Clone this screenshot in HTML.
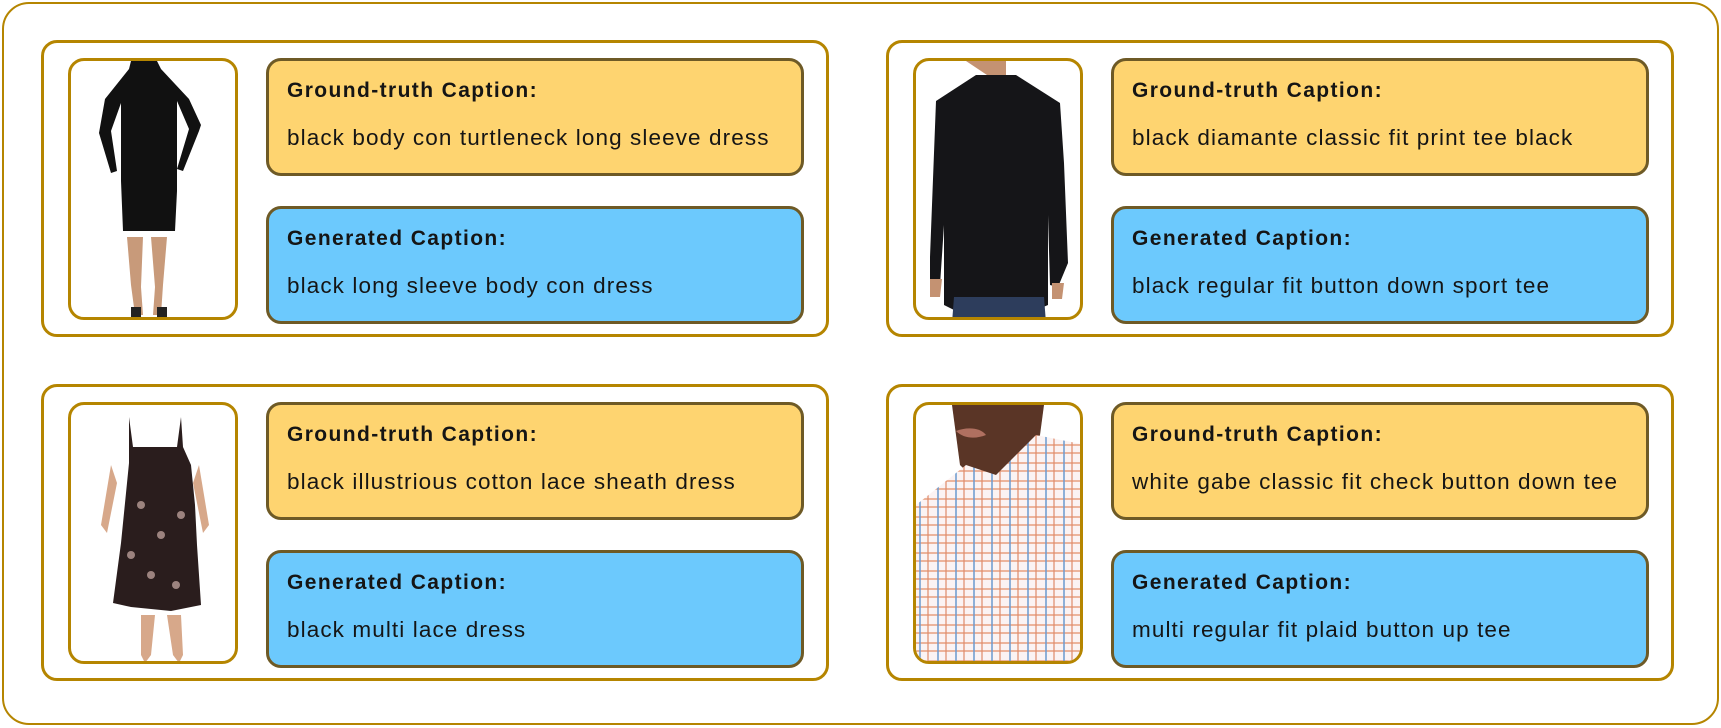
<!DOCTYPE html>
<html><head><meta charset="utf-8"><style>
*{box-sizing:border-box;margin:0;padding:0}
body{width:1721px;height:728px;background:#fff;font-family:"Liberation Sans",sans-serif;position:relative;overflow:hidden}
.outer{position:absolute;left:2px;top:2px;width:1717px;height:723px;border:2.5px solid #b58500;border-radius:27px}
.card{position:absolute;width:788px;height:297px;border:3px solid #b58500;border-radius:16px;background:#fff}
.img{position:absolute;left:24px;top:15px;width:170px;height:262px;border:3px solid #b58500;border-radius:16px;overflow:hidden;background:#fff}
.box{position:absolute;left:222px;width:538px;height:118px;border:3px solid #6e5a26;border-radius:15px;color:#151515}
.y{top:15px;background:#fed470}
.b{top:163px;background:#6cc9fd}
.t{position:absolute;left:18px;top:18px;font-weight:bold;font-size:21px;letter-spacing:1.4px}
.d{position:absolute;left:18px;top:64px;font-size:22.5px;letter-spacing:1.1px}
</style></head><body>
<div class="outer"></div>

<div class="card" style="left:41px;top:40px">
<div class="img"><svg width="170" height="262" viewBox="0 0 170 262">
<path d="M60 0h26l4 8 28 30 12 26-2 6-16 40-6-2 12-40-12-28v90l-2 40H52l-2-50V42l-10 28 6 40-6 2-12-40 6-34 24-30z" fill="#111"/>
<path d="M56 176h16l-2 50 2 28h-8l-4-30zM80 176h16l-4 48-2 30h-8l2-28z" fill="#c89a7a"/>
<path d="M60 246h10v12h-10zM86 246h10v12h-10z" fill="#222"/></svg></div>
<div class="box y"><div class="t">Ground-truth Caption:</div><div class="d">black body con turtleneck long sleeve dress</div></div>
<div class="box b"><div class="t">Generated Caption:</div><div class="d">black long sleeve body con dress</div></div>
</div>

<div class="card" style="left:886px;top:40px">
<div class="img"><svg width="170" height="262" viewBox="0 0 170 262">
<path d="M50 0h40v14l-10 6z" fill="#c49272"/>
<path d="M20 40l40-26h40l44 28 4 60 4 100-10 24-8-2-2-70v90l-14 6H40l-12-6v-80l-4 60-10 2 0-30z" fill="#151518"/>
<path d="M38 236h90l2 26H36z" fill="#2d3d5c"/>
<path d="M14 218h12l-2 18h-10zM136 222h12l-2 16h-10z" fill="#c49272"/></svg></div>
<div class="box y"><div class="t">Ground-truth Caption:</div><div class="d">black diamante classic fit print tee black</div></div>
<div class="box b"><div class="t">Generated Caption:</div><div class="d">black regular fit button down sport tee</div></div>
</div>

<div class="card" style="left:41px;top:384px">
<div class="img"><svg width="170" height="262" viewBox="0 0 170 262">
<path d="M58 12l4 30h44l4-30 2 30 8 18 4 40 2 40 4 60-30 6-40-4-18-4 8-60 4-40 4-40z" fill="#2a1d1d"/>
<path d="M40 60l-10 60 6 8 10-50zM128 60l10 60-6 8-10-50z" fill="#d7a88a"/>
<path d="M70 210h14l-4 40-6 8-4-8zM96 210h14l2 40-4 8-6-8z" fill="#d7a88a"/>
<g fill="#e8c8c0" opacity=".6"><circle cx="70" cy="100" r="4"/><circle cx="90" cy="130" r="4"/><circle cx="110" cy="110" r="4"/><circle cx="80" cy="170" r="4"/><circle cx="105" cy="180" r="4"/><circle cx="60" cy="150" r="4"/></g></svg></div>
<div class="box y"><div class="t">Ground-truth Caption:</div><div class="d">black illustrious cotton lace sheath dress</div></div>
<div class="box b"><div class="t">Generated Caption:</div><div class="d">black multi lace dress</div></div>
</div>

<div class="card" style="left:886px;top:384px">
<div class="img"><svg width="170" height="262" viewBox="0 0 170 262">
<defs><pattern id="p" width="18" height="18" patternUnits="userSpaceOnUse"><rect width="18" height="18" fill="#fbf3f3"/><path d="M0 4h18M0 12h18" stroke="#e7a080" stroke-width="1.5"/><path d="M4 0v18" stroke="#6a9ad0" stroke-width="1.5"/><path d="M12 0v18" stroke="#e08a6a" stroke-width="1.2"/></pattern></defs>
<path d="M36 0h92l-4 30-20 40-40 10-20-20z" fill="#5a3526"/>
<path d="M0 100l50-40 30 10 40-40 50 10v232H0z" fill="url(#p)"/>
<path d="M40 26c10-4 24-4 30 4-10 4-22 4-30-4z" fill="#b07060"/></svg></div>
<div class="box y"><div class="t">Ground-truth Caption:</div><div class="d">white gabe classic fit check button down tee</div></div>
<div class="box b"><div class="t">Generated Caption:</div><div class="d">multi regular fit plaid button up tee</div></div>
</div>
</body></html>
